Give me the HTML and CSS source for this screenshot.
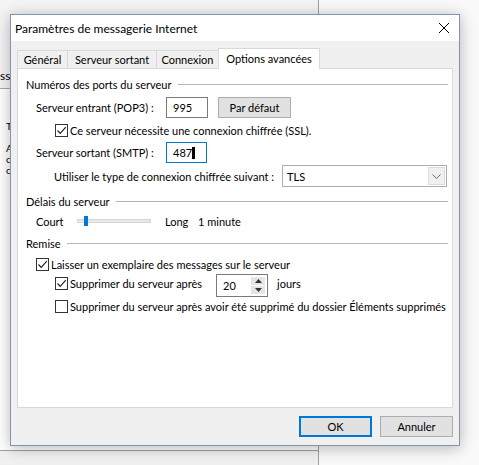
FILE: index.html
```html
<!DOCTYPE html>
<html lang="fr">
<head>
    <meta charset="UTF-8">
    <title>Paramètres de messagerie Internet</title>
    <link rel="stylesheet" href="styles.css">
</head>
<body>

    <div class="desktop">
        <!-- parent window peeking out behind the dialog -->
        <div class="behind">
            <div class="behind-head"><span class="clipped">sse</span></div>
            <div class="behind-body">
                <p class="l1">Tester</p>
                <p>Ajouter</p>
                <p>compte</p>
                <p>compte</p>
            </div>
            <div class="behind-foot"></div>
        </div>

        <div class="dialog">
            <div class="titlebar">
                <span class="title">Paramètres de messagerie Internet</span>
                <svg class="close" width="10" height="10" viewBox="0 0 10 10">
                    <path d="M0 0 L10 10 M10 0 L0 10" stroke="#000" stroke-width="1" fill="none"/>
                </svg>
            </div>

            <div class="client">
                <div class="tabs">
                    <div class="tab w-gen">Général</div>
                    <div class="tab w-out">Serveur sortant</div>
                    <div class="tab w-con">Connexion</div>
                    <div class="tab active">Options avancées</div>
                </div>

                <div class="panel">
                    <div class="group">
                        <span>Numéros des ports du serveur</span><span class="rule"></span>
                    </div>

                    <div class="row r-pop">
                        <span class="label">Serveur entrant (POP3) :</span>
                        <div class="textbox port">995</div>
                        <button class="btn small">Par défaut</button>
                    </div>

                    <div class="row r-ssl sub">
                        <span class="check on"><svg width="11" height="11" viewBox="0 0 11 11"><path d="M1.5 5.5 L4.2 8.3 L9.8 2.2" stroke="#222" stroke-width="1.2" fill="none"/></svg></span>
                        <span>Ce serveur nécessite une connexion chiffrée (SSL).</span>
                    </div>

                    <div class="row r-smtp">
                        <span class="label">Serveur sortant (SMTP) :</span>
                        <div class="textbox port focus">487<span class="caret"></span></div>
                    </div>

                    <div class="row r-tls">
                        <span class="label wide">Utiliser le type de connexion chiffrée suivant :</span>
                        <div class="combo">
                            <span>TLS</span>
                            <span class="combo-arrow"><svg width="9" height="5" viewBox="0 0 9 5"><path d="M0.5 0.5 L4.5 4.5 L8.5 0.5" stroke="#707070" stroke-width="1" fill="none"/></svg></span>
                        </div>
                    </div>

                    <div class="group g-delay">
                        <span>Délais du serveur</span><span class="rule"></span>
                    </div>

                    <div class="row r-slider">
                        <span class="short">Court</span>
                        <div class="track"><span class="thumb"></span></div>
                        <span class="long">Long</span>
                        <span>1 minute</span>
                    </div>

                    <div class="group g-remise">
                        <span>Remise</span><span class="rule"></span>
                    </div>

                    <div class="row r-keep">
                        <span class="check on"><svg width="11" height="11" viewBox="0 0 11 11"><path d="M1.5 5.5 L4.2 8.3 L9.8 2.2" stroke="#222" stroke-width="1.2" fill="none"/></svg></span>
                        <span>Laisser un exemplaire des messages sur le serveur</span>
                    </div>

                    <div class="row r-after sub">
                        <span class="check on"><svg width="11" height="11" viewBox="0 0 11 11"><path d="M1.5 5.5 L4.2 8.3 L9.8 2.2" stroke="#222" stroke-width="1.2" fill="none"/></svg></span>
                        <span class="after-label">Supprimer du serveur après</span>
                        <div class="spin">
                            <span>20</span>
                            <span class="spin-btns">
                                <span class="spin-up"><svg width="7" height="4" viewBox="0 0 7 4"><path d="M0 4 L3.5 0 L7 4 Z" fill="#333"/></svg></span>
                                <span class="spin-down"><svg width="7" height="4" viewBox="0 0 7 4"><path d="M0 0 L3.5 4 L7 0 Z" fill="#333"/></svg></span>
                            </span>
                        </div>
                        <span class="days">jours</span>
                    </div>

                    <div class="row r-when sub">
                        <span class="check"></span>
                        <span>Supprimer du serveur après avoir été supprimé du dossier Éléments supprimés</span>
                    </div>
                </div>

                <div class="actions">
                    <button class="btn default">OK</button>
                    <button class="btn">Annuler</button>
                </div>
            </div>
        </div>
    </div>

</body>
</html>
```

FILE: styles.css
```css
* {
    box-sizing: border-box;
}
body {
    margin: 0;
    width: 479px;
    height: 465px;
    overflow: hidden;
    background: #f9f9f9;
    font-family: Lato, "Liberation Sans", sans-serif;
    font-size: 11px;
    color: #000;
    white-space: nowrap;
}
.desktop {
    position: relative;
    width: 479px;
    height: 465px;
}

/* window behind */
.behind {
    position: absolute;
    left: 0;
    top: 0;
    width: 319px;
    height: 465px;
    border-right: 1px solid #a0a0a0;
    background: #fff;
}
.behind-head {
    height: 89px;
    background: #f4f4f4;
    border-bottom: 1px solid #a8a8a8;
    padding-top: 68px;
}
.clipped {
    display: block;
    font-size: 12px;
}
.behind-body {
    height: 362px;
    background: #fff;
    border-bottom: 1px solid #a0a0a0;
    padding: 32px 0 0 6px;
}
.behind-body p {
    margin: 0;
    font-size: 10px;
    line-height: 11px;
}
.behind-body .l1 {
    margin-bottom: 11px;
}
.behind-foot {
    height: 20px;
    background: #f0f0f0;
}

/* dialog */
.dialog {
    position: absolute;
    left: 10px;
    top: 14px;
    width: 450px;
    height: 432px;
    border: 1px solid #7d94b3;
    background: #f0f0f0;
    box-shadow: 0 2px 14px rgba(0, 0, 0, 0.28);
    display: flex;
    flex-direction: column;
}
.titlebar {
    height: 26px;
    background: #fff;
    display: flex;
    align-items: center;
    justify-content: space-between;
    padding: 0 10px 0 4px;
}
.title {
    font-size: 12px;
}
.close {
    display: block;
}
.client {
    flex: 1;
    padding: 7px 6px 8px 6px;
    display: flex;
    flex-direction: column;
}

/* tabs */
.tabs {
    display: flex;
    align-items: flex-end;
    height: 21px;
    margin-bottom: -1px;
}
.tab {
    height: 18px;
    margin-bottom: 1px;
    border: 1px solid #d9d9d9;
    border-bottom: none;
    border-right: none;
    background: #f0f0f0;
    display: flex;
    align-items: center;
    justify-content: center;
}
.w-gen {
    width: 50px;
}
.w-out {
    width: 89px;
}
.w-con {
    width: 62px;
}
.tab.active {
    position: relative;
    width: 102px;
    height: 21px;
    margin-bottom: 0;
    background: #fff;
    border-right: 1px solid #d9d9d9;
    padding-bottom: 2px;
}
.panel {
    height: 340px;
    background: #fff;
    border: 1px solid #d9d9d9;
    padding: 7px 4px 0 8px;
}

/* group headers */
.group {
    display: flex;
    align-items: center;
    height: 16px;
}
.rule {
    flex: 1;
    height: 1px;
    margin-left: 6px;
    margin-top: 1px;
    background: #b5b5b5;
}
.g-delay {
    margin-top: 6px;
}
.g-remise {
    margin-top: 6px;
}

/* rows */
.row {
    display: flex;
    align-items: center;
    margin-left: 10px;
}
.row > * {
    flex-shrink: 0;
}
.row.sub {
    margin-left: 29px;
}
.label {
    width: 130px;
}
.label.wide {
    width: 228px;
}
.r-pop {
    height: 21px;
    margin-top: 5px;
}
.r-ssl {
    height: 16px;
    margin-top: 4px;
}
.r-smtp {
    height: 21px;
    margin-top: 4px;
}
.r-tls {
    height: 22px;
    margin-top: 2px;
    margin-left: 28px;
}
.r-slider {
    height: 16px;
    margin-top: 4px;
}
.r-keep {
    height: 16px;
    margin-top: 5px;
}
.r-after {
    height: 16px;
    margin-top: 3px;
}
.r-when {
    height: 16px;
    margin-top: 7px;
}

/* controls */
.textbox {
    height: 21px;
    border: 1px solid #7a7a7a;
    background: #fff;
    display: flex;
    align-items: center;
    padding-left: 6px;
}
.port {
    width: 42px;
}
.textbox.focus {
    width: 41px;
    border-color: #0078d7;
}
.caret {
    display: inline-block;
    width: 3px;
    height: 12px;
    background: #000;
}
.btn {
    font: inherit;
    color: #000;
    height: 21px;
    width: 73px;
    padding: 0;
    background: #e1e1e1;
    border: 1px solid #adadad;
}
.btn.small {
    margin-left: 10px;
}
.btn.default {
    border: 2px solid #0078d7;
}
.check {
    width: 13px;
    height: 13px;
    border: 1px solid #333;
    background: #fff;
    margin-right: 2px;
    display: flex;
    align-items: center;
    justify-content: center;
}
.combo {
    width: 165px;
    height: 22px;
    border: 1px solid #acacac;
    background: #fff;
    display: flex;
    align-items: center;
    justify-content: space-between;
    padding: 1px 1px 1px 4px;
}
.combo-arrow {
    width: 17px;
    height: 18px;
    background: #f0f0f0;
    border: 1px solid #dcdcdc;
    display: flex;
    align-items: center;
    justify-content: center;
}
.short {
    width: 41px;
}
.track {
    position: relative;
    width: 74px;
    height: 4px;
    background: #e7eaea;
    border: 1px solid #d6d6d6;
}
.thumb {
    position: absolute;
    left: 6px;
    top: -4px;
    width: 4px;
    height: 10px;
    background: #007ad9;
}
.long {
    margin-left: 14px;
    width: 33px;
}
.after-label {
    width: 146px;
}
.spin {
    align-self: flex-start;
    margin-top: -1px;
    width: 52px;
    height: 23px;
    border: 1px solid #7a7a7a;
    background: #fff;
    display: flex;
    align-items: center;
    justify-content: space-between;
    padding: 1px 2px 1px 6px;
}
.spin-btns {
    width: 14px;
    height: 17px;
    display: flex;
    flex-direction: column;
    gap: 1px;
}
.spin-up, .spin-down {
    flex: 1;
    background: #e5e5e5;
    display: flex;
    align-items: center;
    justify-content: center;
}
.days {
    margin-left: 9px;
}
.actions {
    display: flex;
    justify-content: flex-end;
    gap: 8px;
    margin-top: 8px;
}
```
